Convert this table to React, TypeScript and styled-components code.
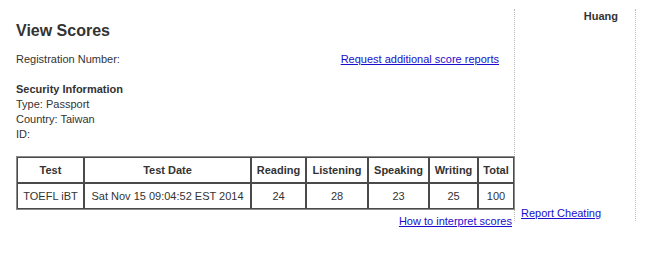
import styled, { createGlobalStyle } from "styled-components";

const GlobalStyle = createGlobalStyle`
  * {
    box-sizing: border-box;
  }
  body {
    margin: 0;
    background: #ffffff;
    font-family: "Liberation Sans", Arial, sans-serif;
    font-size: 11px;
    line-height: 15px;
    color: #333333;
  }
`;

const scoreRows = [
  {
    test: "TOEFL iBT",
    date: "Sat Nov 15 09:04:52 EST 2014",
    reading: 24,
    listening: 28,
    speaking: 23,
    writing: 25,
    total: 100,
  },
];

const columns = [
  { label: "Test", width: 67 },
  { label: "Test Date", width: 167 },
  { label: "Reading", width: 55 },
  { label: "Listening", width: 62 },
  { label: "Speaking", width: 61 },
  { label: "Writing", width: 49 },
  { label: "Total", width: 36 },
];

const App = () => {
  return (
    <>
      <GlobalStyle />
      <Page>
        <Main>
          <Title>View Scores</Title>
          <InfoRow>
            <span>Registration Number:</span>
            <Link href="#">Request additional score reports</Link>
          </InfoRow>
          <Security>
            <SectionLabel>Security Information</SectionLabel>
            <div>Type: Passport</div>
            <div>Country: Taiwan</div>
            <div>ID:</div>
          </Security>
          <ScoreTable>
            <colgroup>
              {columns.map((c) => (
                <col key={c.label} style={{ width: c.width }} />
              ))}
            </colgroup>
            <thead>
              <tr>
                {columns.map((c) => (
                  <HeadCell key={c.label}>{c.label}</HeadCell>
                ))}
              </tr>
            </thead>
            <tbody>
              {scoreRows.map((r) => (
                <tr key={r.test}>
                  <Cell>{r.test}</Cell>
                  <Cell>{r.date}</Cell>
                  <Cell>{r.reading}</Cell>
                  <Cell>{r.listening}</Cell>
                  <Cell>{r.speaking}</Cell>
                  <Cell>{r.writing}</Cell>
                  <Cell>{r.total}</Cell>
                </tr>
              ))}
            </tbody>
          </ScoreTable>
        </Main>
        <Side>
          <UserName>Huang</UserName>
          <SideLink href="#">Report Cheating</SideLink>
        </Side>
      </Page>
      <FooterRow>
        <Link href="#">How to interpret scores</Link>
      </FooterRow>
    </>
  );
};

export default App;

const Page = styled.div`
  display: flex;
  align-items: stretch;
  margin-top: 9px;
`;

const Main = styled.div`
  width: 515px;
  padding: 0 15px 11px 16px;
  border-right: 1px dotted #b8b8b8;
`;

const Title = styled.h1`
  margin: 11px 0 10px;
  font-size: 16px;
  line-height: 22px;
  font-weight: bold;
  color: #333333;
`;

const InfoRow = styled.div`
  display: flex;
  justify-content: space-between;
  align-items: baseline;
`;

const Link = styled.a`
  color: #1a0dcc;
  text-decoration: underline;
`;

const Security = styled.div`
  margin-top: 15px;
`;

const SectionLabel = styled.div`
  font-weight: bold;
`;

const ScoreTable = styled.table`
  width: 499px;
  margin-top: 14px;
  table-layout: fixed;
  border-collapse: separate;
  border-spacing: 0;
  border: 1px solid #8a8a8a;
`;

const HeadCell = styled.th`
  border: 1px solid #4a4a4a;
  padding: 5px 0 4px;
  font-weight: bold;
  text-align: center;
  white-space: nowrap;
  color: #333333;
`;

const Cell = styled.td`
  border: 1px solid #4a4a4a;
  padding: 5px 0 4px;
  text-align: center;
  white-space: nowrap;
  color: #333333;
`;

const FooterRow = styled.div`
  width: 515px;
  margin-top: -7px;
  padding-right: 3px;
  text-align: right;
`;

const Side = styled.div`
  width: 121px;
  display: flex;
  flex-direction: column;
  padding: 0 17px 0 6px;
  border-right: 1px dotted #b8b8b8;
`;

const UserName = styled.div`
  font-weight: bold;
  text-align: right;
`;

const SideLink = styled(Link)`
  margin-top: auto;
`;
